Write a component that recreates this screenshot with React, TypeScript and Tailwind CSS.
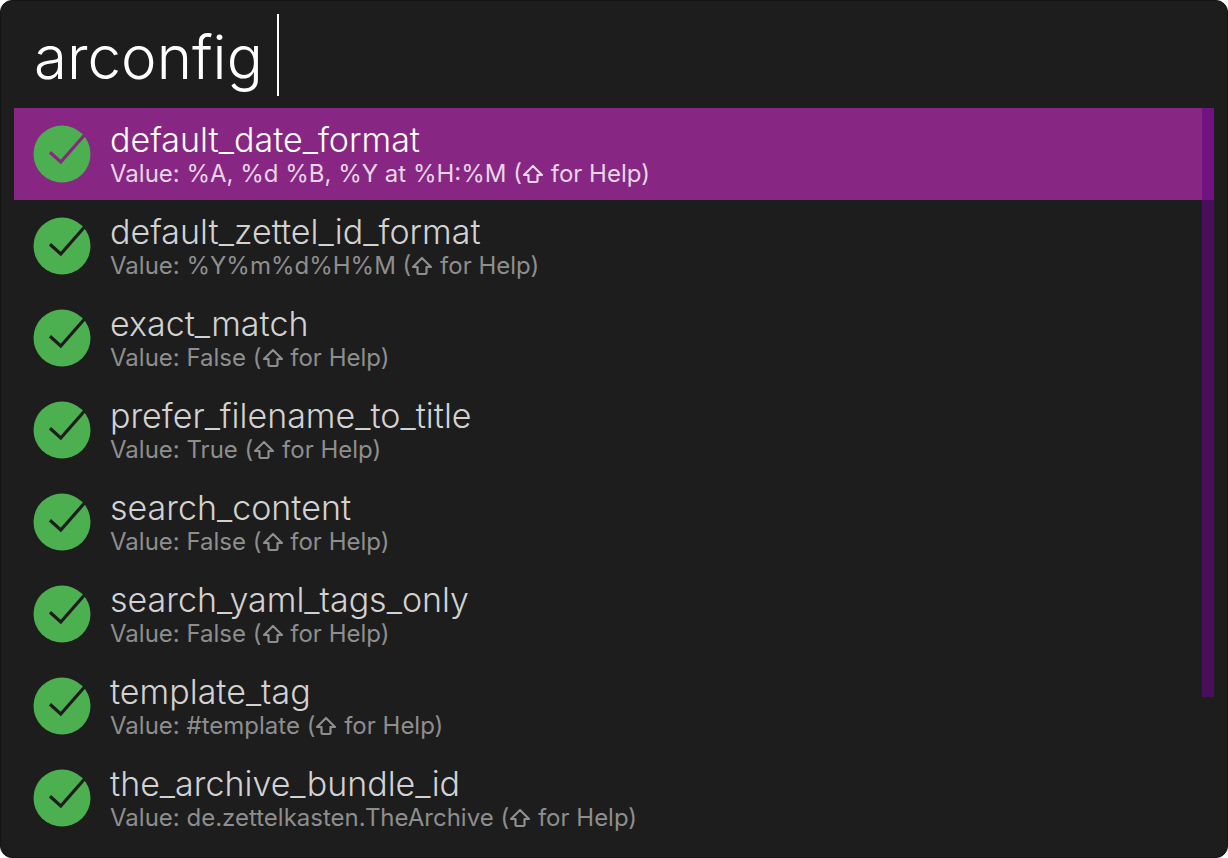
import React, { useState } from "react";

type Item = { title: string; value: string };

const items: Item[] = [
  { title: "default_date_format", value: "%A, %d %B, %Y at %H:%M" },
  { title: "default_zettel_id_format", value: "%Y%m%d%H%M" },
  { title: "exact_match", value: "False" },
  { title: "prefer_filename_to_title", value: "True" },
  { title: "search_content", value: "False" },
  { title: "search_yaml_tags_only", value: "False" },
  { title: "template_tag", value: "#template" },
  { title: "the_archive_bundle_id", value: "de.zettelkasten.TheArchive" },
];

function CheckBadge({ selected }: { selected: boolean }) {
  return (
    <svg viewBox="0 0 58 58" className="size-[58px] shrink-0" aria-hidden="true">
      <circle cx="29" cy="29" r="28.5" fill="#4caf50" />
      <path
        d="M17 27.2 L27.8 37 L51.5 10"
        fill="none"
        strokeWidth="3.2"
        className={selected ? "stroke-[#882783]" : "stroke-[#1d1d1d]"}
      />
    </svg>
  );
}

function ShiftKey() {
  return (
    <svg viewBox="0 0 22 20" className="inline-block h-5 w-[22px] align-[-2px]" role="img" aria-label="Shift">
      <path
        d="M11 2 L20 11 H15.5 V16.8 Q15.5 18 14.3 18 H7.7 Q6.5 18 6.5 16.8 V11 H2 Z"
        fill="none"
        stroke="currentColor"
        strokeWidth="2.2"
        strokeLinejoin="round"
      />
    </svg>
  );
}

function Row({ item, selected, onSelect }: { item: Item; selected: boolean; onSelect: () => void }) {
  return (
    <li>
      <button
        type="button"
        onClick={onSelect}
        className={`flex h-[92px] w-full items-center gap-[19px] pl-[19px] text-left ${selected ? "bg-[#882783]" : ""}`}
      >
        <CheckBadge selected={selected} />
        <span className="flex min-w-0 flex-col whitespace-nowrap">
          <span className={`text-[34px] leading-10 font-[350] ${selected ? "text-white" : "text-[#d2d2d2]"}`}>
            {item.title}
          </span>
          <span className={`text-[24px] leading-7 ${selected ? "text-[#e7d4e6]" : "text-[#8e8e8e]"}`}>
            Value: {item.value} (<ShiftKey /> for Help)
          </span>
        </span>
      </button>
    </li>
  );
}

export default function App() {
  const [query, setQuery] = useState("arconfig");
  const [active, setActive] = useState(0);

  return (
    <div className="min-h-screen bg-white font-['Inter',sans-serif]">
      <main className="min-h-screen rounded-[12px] border border-[#141414] bg-[#1d1d1d] p-[13px]">
        <div className="mb-3 flex h-[82px] items-center pl-5">
          <input
            aria-label="Search"
            value={query}
            onChange={(e) => setQuery(e.target.value)}
            className="field-sizing-content bg-transparent pt-1 text-[60px] leading-[76px] font-[350] text-white caret-transparent outline-none"
          />
          <span className="ml-3.5 h-full w-[2px] bg-white" />
        </div>
        <div className="relative">
          <ul>
            {items.map((item, i) => (
              <Row key={item.title} item={item} selected={i === active} onSelect={() => setActive(i)} />
            ))}
          </ul>
          <div className="pointer-events-none absolute top-0 right-0 h-4/5 w-3 bg-[#62087e]/64" />
        </div>
      </main>
    </div>
  );
}
